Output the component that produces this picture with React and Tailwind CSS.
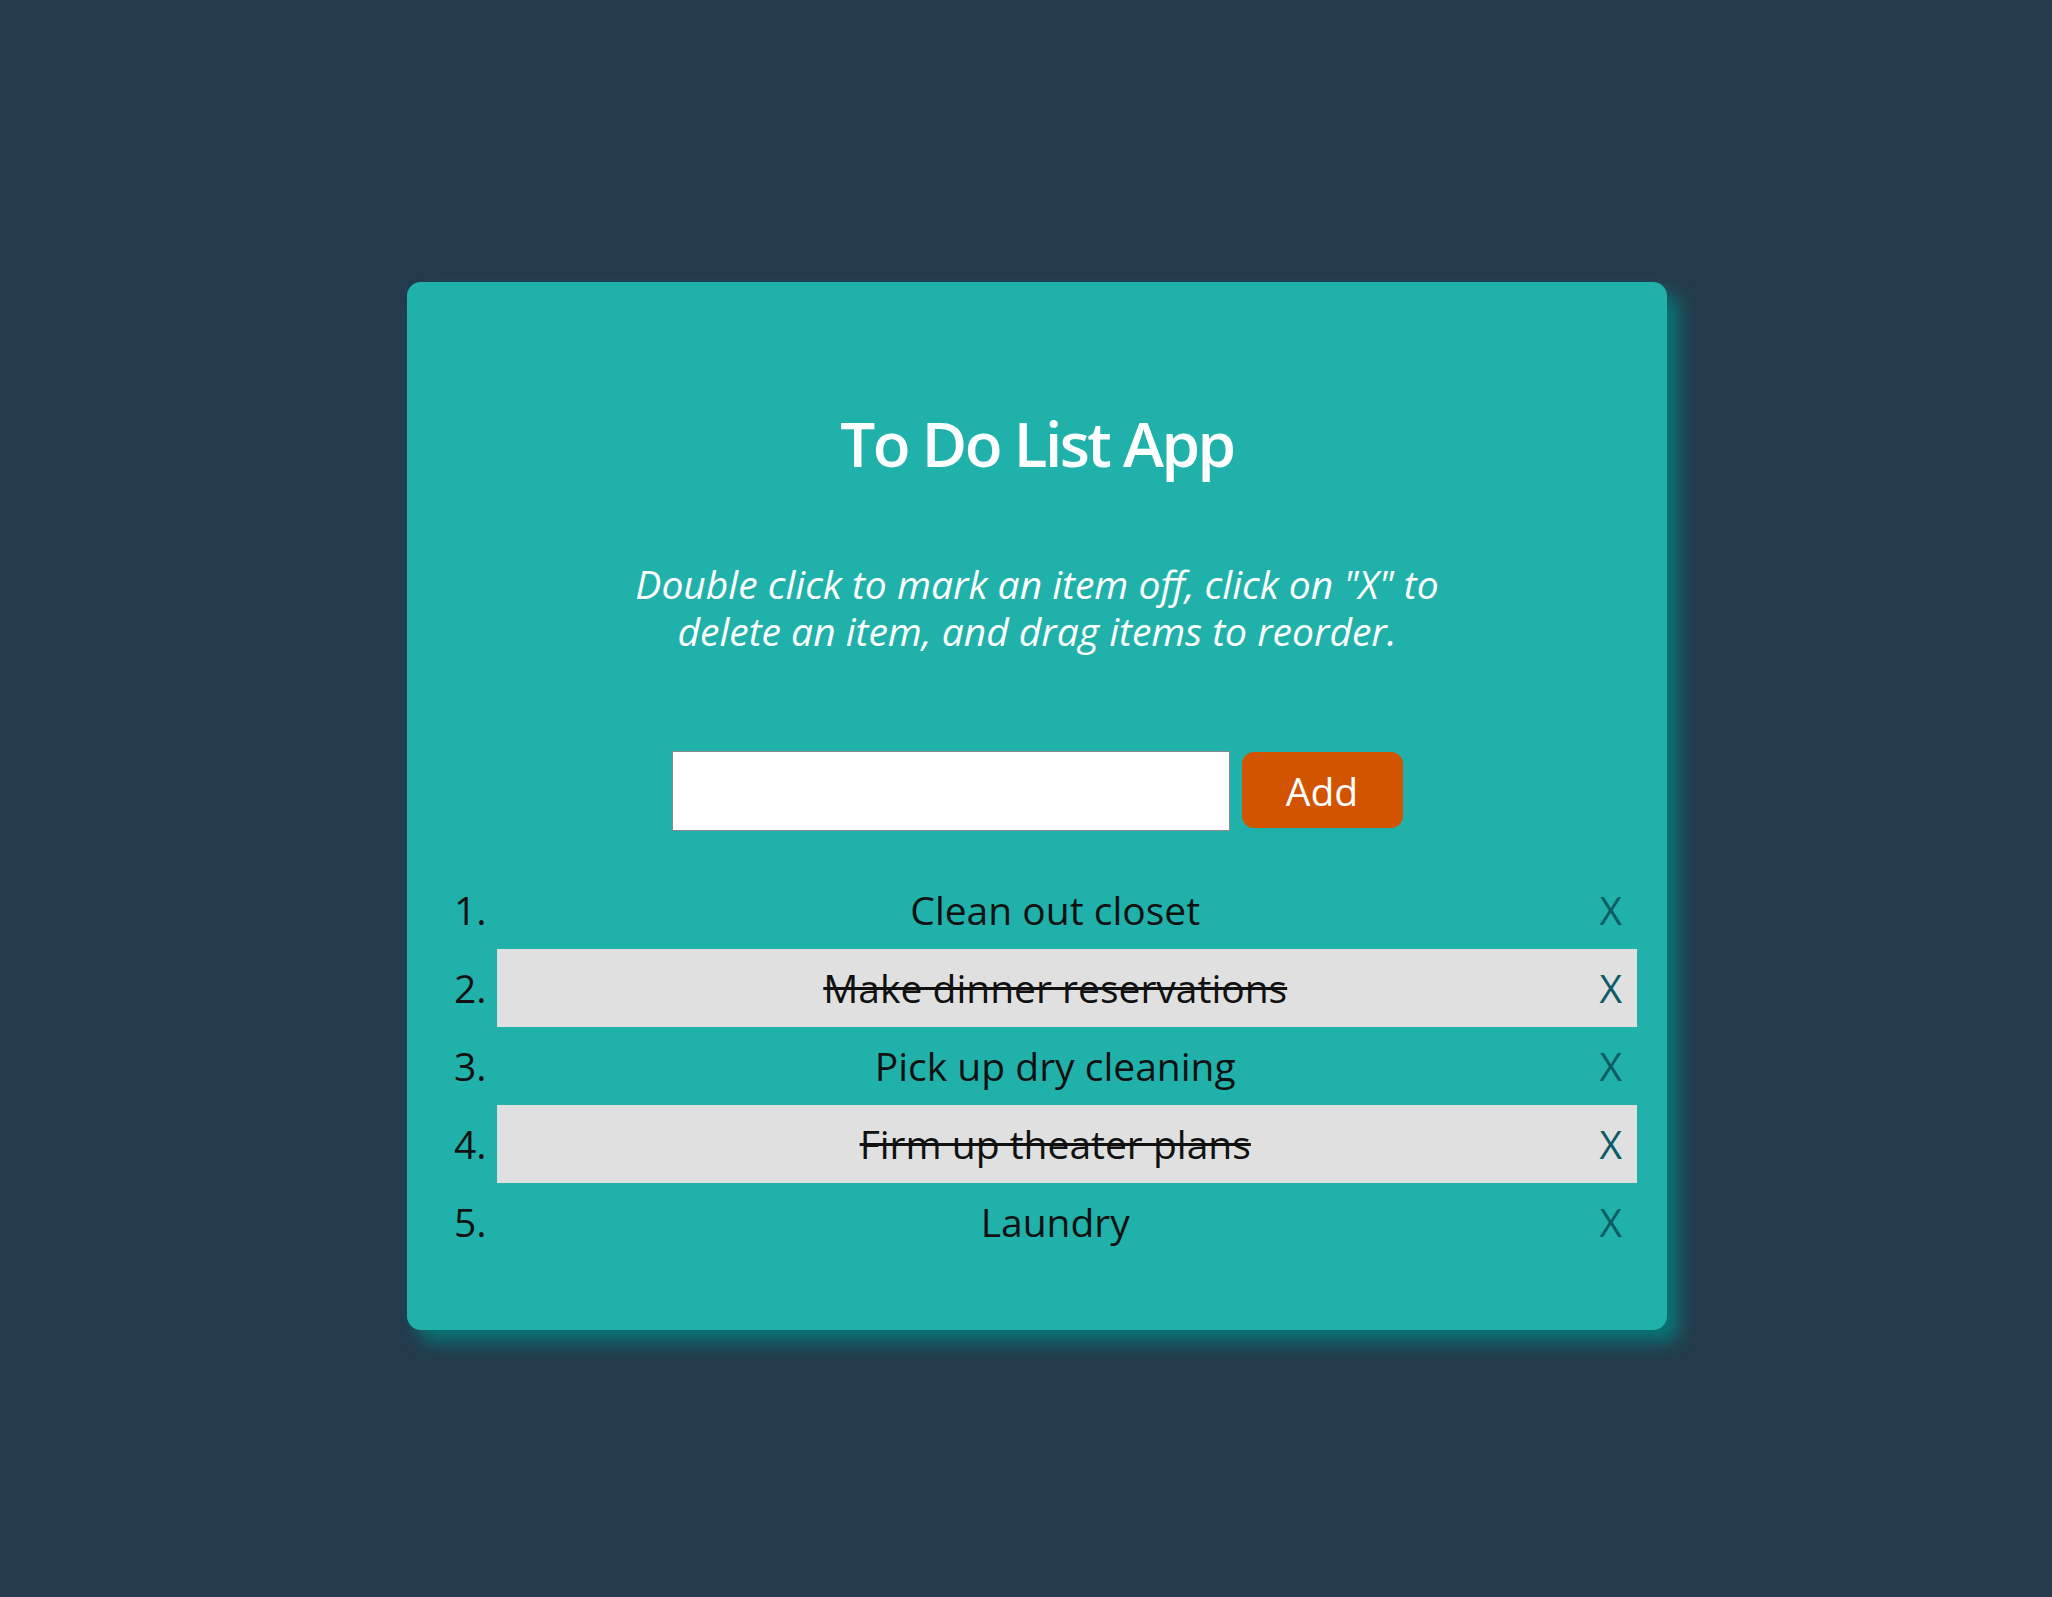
import { useState } from 'react'

const initialItems = [
  { id: 1, text: 'Clean out closet', done: false },
  { id: 2, text: 'Make dinner reservations', done: true },
  { id: 3, text: 'Pick up dry cleaning', done: false },
  { id: 4, text: 'Firm up theater plans', done: true },
  { id: 5, text: 'Laundry', done: false },
]

const App = () => {
  const [items, setItems] = useState(initialItems)
  const [value, setValue] = useState('')

  const addItem = (e) => {
    e.preventDefault()
    if (!value.trim()) return
    setItems([...items, { id: Date.now(), text: value.trim(), done: false }])
    setValue('')
  }

  const toggle = (id) => {
    setItems(items.map(item => (item.id === id ? { ...item, done: !item.done } : item)))
  }

  const remove = (id) => {
    setItems(items.filter(item => item.id !== id))
  }

  return (
    <div className="min-h-screen bg-[#243b4d] pt-[282px] pl-[407px] pb-[267px] font-['Open_Sans',sans-serif]">
      <div className="w-[1260px] bg-[#20b2aa] rounded-[14px] pt-[130px] pb-[69px] shadow-[12px_12px_18px_#087676]">
        <h1 className="text-[62px] leading-none font-semibold tracking-[-2.5px] text-white text-center">To Do List App</h1>

        <p className="mt-[86px] text-[39px] leading-[47px] italic text-white text-center">
          Double click to mark an item off, click on "X" to
          <br />
          delete an item, and drag items to reorder.
        </p>

        <form onSubmit={addItem} className="mt-[97px] flex justify-center items-start gap-[12px]">
          <input
            type="text"
            value={value}
            onChange={(e) => setValue(e.target.value)}
            className="w-[558px] h-[80px] bg-white border border-[#8a8a8a] px-3 text-[39px] text-black outline-none"
          />
          <button
            type="submit"
            className="mt-[1px] w-[161px] h-[76px] rounded-[12px] bg-[#d35400] text-white text-[39px] leading-none"
          >
            Add
          </button>
        </form>

        {/* Items */}
        <div className="mt-[40px] mr-[30px]">
          {items.map((item, i) => (
            <div key={item.id} className="flex items-center h-[78px] text-[39px] text-[#111]">
              <div className="w-[90px] shrink-0 pl-[47px]">{i + 1}.</div>
              <div
                onDoubleClick={() => toggle(item.id)}
                className={`flex-1 h-full flex items-center ${item.done ? 'bg-[#e0e0e0]' : ''}`}
              >
                <span className={`flex-1 pl-[14px] text-center ${item.done ? 'line-through' : ''}`}>{item.text}</span>
                <span
                  onClick={() => remove(item.id)}
                  className="pr-[15px] text-[#0a5c66] cursor-pointer"
                >
                  X
                </span>
              </div>
            </div>
          ))}
        </div>
      </div>
    </div>
  )
}

export default App
